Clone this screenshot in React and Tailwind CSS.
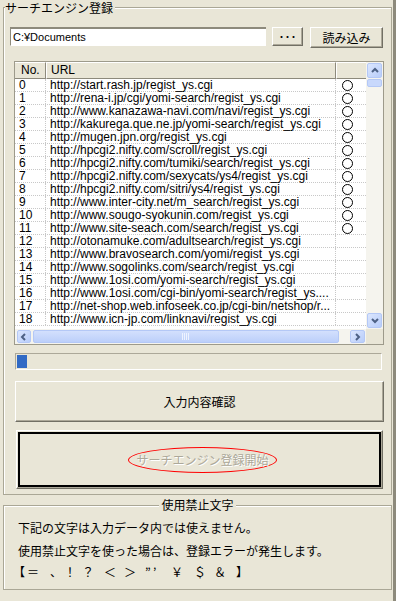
import React from "react";

const ROWS = [
  ["0", "http://start.rash.jp/regist_ys.cgi", true],
  ["1", "http://rena-i.jp/cgi/yomi-search/regist_ys.cgi", true],
  ["2", "http://www.kanazawa-navi.com/navi/regist_ys.cgi", true],
  ["3", "http://kakurega.que.ne.jp/yomi-search/regist_ys.cgi", true],
  ["4", "http://mugen.jpn.org/regist_ys.cgi", true],
  ["5", "http://hpcgi2.nifty.com/scroll/regist_ys.cgi", true],
  ["6", "http://hpcgi2.nifty.com/tumiki/search/regist_ys.cgi", true],
  ["7", "http://hpcgi2.nifty.com/sexycats/ys4/regist_ys.cgi", true],
  ["8", "http://hpcgi2.nifty.com/sitri/ys4/regist_ys.cgi", true],
  ["9", "http://www.inter-city.net/m_search/regist_ys.cgi", true],
  ["10", "http://www.sougo-syokunin.com/regist_ys.cgi", true],
  ["11", "http://www.site-seach.com/search/regist_ys.cgi", true],
  ["12", "http://otonamuke.com/adultsearch/regist_ys.cgi", false],
  ["13", "http://www.bravosearch.com/yomi/regist_ys.cgi", false],
  ["14", "http://www.sogolinks.com/search/regist_ys.cgi", false],
  ["15", "http://www.1osi.com/yomi-search/regist_ys.cgi", false],
  ["16", "http://www.1osi.com/cgi-bin/yomi-search/regist_ys....", false],
  ["17", "http://net-shop.web.infoseek.co.jp/cgi-bin/netshop/r...", false],
  ["18", "http://www.icn-jp.com/linknavi/regist_ys.cgi", false],
];

// each glyph sits in a slot as wide as the gap to the next one
const BANNED = [
  ["【", "w-[14px]"],
  ["＝", "w-[23px]"],
  ["、", "w-[14px]"],
  ["！", "w-[18px]"],
  ["？", "w-[22px]"],
  ["＜", "w-[20px]"],
  ["＞", "w-[21px]"],
  ["”", "w-[8px]"],
  ["’", "w-[18px]"],
  ["￥", "w-[23px]"],
  ["＄", "w-[20px]"],
  ["＆", "w-[22px]"],
  ["】", "w-[12px]"],
];

const jp = "font-['Noto_Sans_CJK_JP',sans-serif]";
const latin = "font-['Liberation_Sans','Noto_Sans_CJK_JP',sans-serif]";
const raised = "border border-t-white border-l-white border-r-[#716f64] border-b-[#716f64] shadow-[inset_-1px_-1px_0_#aca899]";

function Arrow({ dir }) {
  const pts = {
    up: "2,6 5,3 8,6",
    down: "2,3 5,6 8,3",
    left: "6,2 3,5 6,8",
    right: "3,2 6,5 3,8",
  }[dir];
  return (
    <svg width="10" height="9" viewBox="0 0 10 9">
      <polyline points={pts} fill="none" stroke="#4d6185" strokeWidth="2" />
    </svg>
  );
}

function ScrollBtn({ dir, className = "" }) {
  return (
    <div className={`flex items-center justify-center rounded-[2px] border border-[#b4c8f6] bg-[linear-gradient(135deg,#dbe6fe,#b8cdfa)] ${className}`}>
      <Arrow dir={dir} />
    </div>
  );
}

export default function App() {
  return (
    <div className={`w-[396px] h-[601px] bg-[#e9e6d7] overflow-hidden text-black ${jp} border-r-[3px] border-[#8d8a7c]`}>
      {/* サーチエンジン登録 group */}
      <div className="relative ml-[3px] mt-[7px] w-[389px] h-[488px] border border-[#aaa796] shadow-[inset_1px_1px_0_#fff]">
        <div className="absolute left-[1px] top-[-7px] bg-[#e9e6d7] pr-[2px] text-[12px] leading-[14px]">サーチエンジン登録</div>

        {/* path row */}
        <div className="flex items-start ml-[6px] mt-[19px]">
          <div className={`w-[256px] h-[19px] bg-white border-t-2 border-l border-[#8d8a7c] border-b border-b-white pl-[2px] text-[11px] leading-[16px] ${latin}`}>C:¥Documents</div>
          <div className={`ml-[6px] w-[31px] h-[19px] ${raised} flex items-center justify-center text-[12px] leading-none`}>･･･</div>
          <div className={`ml-[7px] w-[73px] h-[21px] ${raised} flex items-center justify-center text-[12px] leading-none`}>読み込み</div>
        </div>

        {/* list view */}
        <div className="ml-[10px] mt-[13px] w-[370px] h-[284px] border border-[#9d9a8b] bg-white flex flex-col">
          <div className="flex h-[267px]">
            <div className="w-[351px] flex flex-col overflow-hidden">
              <div className={`flex h-[17px] shrink-0 bg-[#e9e6d7] text-[12px] leading-[15px] ${latin}`}>
                <div className="w-[31px] pl-[6px] border-r border-r-[#8d8a7c] border-b border-b-[#8d8a7c] border-t border-t-white">No.</div>
                <div className="w-[290px] pl-[4px] border-r border-r-[#8d8a7c] border-b border-b-[#8d8a7c] border-t border-t-white border-l border-l-white">URL</div>
                <div className="flex-1 border-b border-b-[#8d8a7c] border-t border-t-white border-l border-l-white"></div>
              </div>
              {ROWS.map(([no, url, mark]) => (
                <div key={no} className={`flex h-[13px] shrink-0 border-b border-dotted border-[#c8c8c8] text-[12px] leading-[13px] ${latin}`}>
                  <div className="w-[31px] pl-[4px] border-r border-dotted border-[#c8c8c8]">{no}</div>
                  <div className="w-[290px] pl-[4px] whitespace-nowrap overflow-x-clip border-r border-dotted border-[#c8c8c8]">{url}</div>
                  <div className="flex-1 flex items-center pl-[6px]">
                    {mark && <span className="w-[11px] h-[11px] rounded-full border border-black"></span>}
                  </div>
                </div>
              ))}
            </div>
            {/* vertical scrollbar */}
            <div className="w-[17px] bg-[#f5f4ee] flex flex-col p-[1px]">
              <ScrollBtn dir="up" className="h-[15px]" />
              <div className="mt-[1px] h-[8px] rounded-[2px] border border-[#b4c8f6] bg-[#c8d8fc]"></div>
              <div className="flex-1"></div>
              <ScrollBtn dir="down" className="h-[15px]" />
            </div>
          </div>
          {/* horizontal scrollbar */}
          <div className="flex h-[15px]">
            <div className="w-[351px] bg-[#f5f4ee] flex p-[1px] pl-[2px]">
              <ScrollBtn dir="left" className="w-[14px]" />
              <div className="ml-[2px] w-[306px] rounded-[2px] border border-[#b4c8f6] bg-[linear-gradient(180deg,#d3e0fd,#bccffa)] flex items-center justify-center">
                <svg width="8" height="7" viewBox="0 0 8 7">
                  <path d="M0.5 0v7M2.5 0v7M4.5 0v7M6.5 0v7" stroke="#eef3ff" strokeWidth="1" />
                </svg>
              </div>
              <div className="flex-1"></div>
              <ScrollBtn dir="right" className="w-[15px]" />
            </div>
            <div className="flex-1 bg-[#e9e6d7]"></div>
          </div>
        </div>

        {/* progress */}
        <div className="ml-[11px] mt-[8px] w-[367px] h-[17px] border border-t-[#aca899] border-l-[#aca899] border-r-white border-b-white p-[1px]">
          <div className="w-[10px] h-[13px] bg-[#316ac5]"></div>
        </div>

        {/* 入力内容確認 */}
        <div className={`ml-[11px] mt-[11px] w-[369px] h-[41px] ${raised} flex items-center justify-center text-[12px]`}>入力内容確認</div>

        {/* サーチエンジン登録開始 (disabled, default) */}
        <div className={`ml-[12px] mt-[8px] w-[367px] h-[59px] ${raised} p-[1px]`}>
          <div className="h-full border-2 border-black flex items-center justify-center">
            <div className="ml-[6px] w-[149px] h-[26px] rounded-[50%] border border-[#ff0000] flex items-center justify-center text-[12px] text-[#aca899] [text-shadow:1px_1px_0_#fff]">サーチエンジン登録開始</div>
          </div>
        </div>
      </div>

      {/* 使用禁止文字 group */}
      <div className="relative ml-[3px] mt-[10px] w-[389px] h-[85px] border border-[#aaa796] shadow-[inset_1px_1px_0_#fff] text-[12px]">
        <div className="absolute left-0 right-0 top-[-8px] flex justify-center">
          <span className="bg-[#e9e6d7] px-[2px] leading-[14px]">使用禁止文字</span>
        </div>
        <div className="ml-[14px] mt-[15px] leading-[14px]">下記の文字は入力データ内では使えません。</div>
        <div className="ml-[14px] mt-[9px] leading-[14px]">使用禁止文字を使った場合は、登録エラーが発生します。</div>
        <div className="ml-[9px] mt-[7px] flex leading-[14px]">
          {BANNED.map(([c, w], i) => (
            <span key={i} className={`${w} shrink-0 whitespace-nowrap`}>{c}</span>
          ))}
        </div>
      </div>
    </div>
  );
}
